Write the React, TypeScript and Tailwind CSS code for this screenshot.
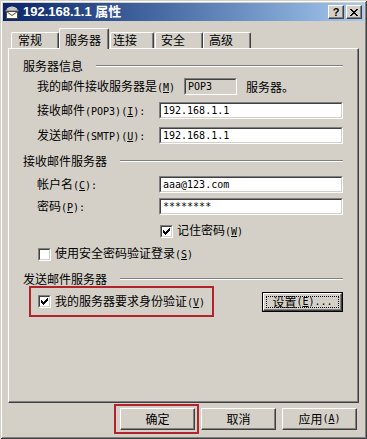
import React from "react";

function A({ children }: { children: React.ReactNode }) {
  return <span className="font-['DejaVu_Sans_Mono',monospace] text-[10px]">{children}</span>;
}

function Field({ value, w, gray }: { value: string; w: string; gray?: boolean }) {
  return (
    <div className={`h-[17px] ${w} shrink-0 border border-t-[#808080] border-l-[#808080] border-r-white border-b-white`}>
      <div
        className={`h-full border border-t-[#404040] border-l-[#404040] border-r-[#d4d0c8] border-b-[#d4d0c8] ${
          gray ? "bg-[#d4d0c8]" : "bg-white"
        } pl-[2px] flex items-center font-['DejaVu_Sans_Mono',monospace] text-[10px] leading-[13px] text-black`}
      >
        {value}
      </div>
    </div>
  );
}

function Check({ checked }: { checked?: boolean }) {
  return (
    <div className="w-[13px] h-[13px] shrink-0 border border-t-[#808080] border-l-[#808080] border-r-white border-b-white">
      <div className="w-full h-full border border-t-[#404040] border-l-[#404040] border-r-[#d4d0c8] border-b-[#d4d0c8] bg-white flex items-center justify-center">
        {checked && (
          <svg width="7" height="7" viewBox="0 0 7 7" shapeRendering="crispEdges">
            <path d="M6 0h1v3h-1zM5 1h1v3h-1zM4 2h1v3h-1zM3 3h1v3h-1zM2 4h1v3h-1zM1 3h1v3h-1zM0 2h1v3h-1z" fill="#000" />
          </svg>
        )}
      </div>
    </div>
  );
}

function Group({ title }: { title: string }) {
  return (
    <div className="flex items-center h-[14px] leading-[14px]">
      <span className="whitespace-nowrap">{title}</span>
      <div className="flex-1 ml-[13px] h-[2px] border-t border-t-[#808080] border-b border-b-white" />
    </div>
  );
}

function Btn({ children, w }: { children: React.ReactNode; w: string }) {
  return (
    <div
      className={`${w} h-[22px] shrink-0 border border-t-white border-l-white border-r-[#404040] border-b-[#404040] shadow-[inset_-1px_-1px_0_#808080] flex items-center justify-center leading-[14px]`}
    >
      {children}
    </div>
  );
}

function Tab({ label, w, selected, pl }: { label: string; w: string; selected?: boolean; pl: string }) {
  if (selected) {
    return (
      <div
        className={`${w} h-[21px] -mb-[1px] relative z-10 bg-[#d4d0c8] border-t border-l border-t-white border-l-white border-r border-r-[#404040] shadow-[inset_-1px_0_0_#808080] rounded-t-[2px] ${pl} pt-[4px] leading-[14px] shrink-0`}
      >
        {label}
      </div>
    );
  }
  return (
    <div
      className={`${w} h-[16px] bg-[#d4d0c8] border-t border-l border-t-white border-l-white border-r border-r-[#404040] shadow-[inset_-1px_0_0_#808080] rounded-t-[2px] ${pl} leading-[14px] shrink-0`}
    >
      {label}
    </div>
  );
}

function TitleIcon() {
  return (
    <svg width="16" height="16" viewBox="0 0 16 16" className="shrink-0">
      <path d="M1 7 Q8 -1 15 7 Z" fill="#c8c8c8" stroke="#5a5a5a" strokeWidth="0.8" />
      <path d="M3 5 Q8 1 13 5" fill="none" stroke="#ffffff" strokeWidth="0.8" />
      <rect x="2.5" y="7.5" width="11" height="7" fill="#fffbe6" stroke="#4a4a4a" strokeWidth="1" />
      <path d="M2.5 7.5 L8 11.5 L13.5 7.5" fill="none" stroke="#4a4a4a" strokeWidth="1" />
    </svg>
  );
}

export default function App() {
  return (
    <div className="w-[367px] h-[439px] overflow-hidden bg-[#d4d0c8] text-black font-['Noto_Sans_CJK_SC',sans-serif] text-[12px] p-[3px] shadow-[inset_1px_1px_0_#d4d0c8,inset_-1px_-1px_0_#404040,inset_2px_2px_0_#ffffff,inset_-2px_-2px_0_#808080] flex flex-col">
      {/* Title bar */}
      <div className="h-[18px] shrink-0 bg-linear-to-r from-[#0a246a] to-[#a6caf0] flex items-center pl-[1px] pr-[2px]">
        <TitleIcon />
        <span className="ml-[3px] text-white font-bold text-[13px] leading-[16px] font-['Liberation_Sans','Noto_Sans_CJK_SC',sans-serif] whitespace-nowrap">
          192.168.1.1 属性
        </span>
        <div className="flex-1" />
        <div className="w-[16px] h-[14px] border border-t-white border-l-white border-r-[#404040] border-b-[#404040] shadow-[inset_-1px_-1px_0_#808080] bg-[#d4d0c8] flex items-center justify-center font-['Liberation_Sans',sans-serif] font-bold text-[11px] leading-[11px]">
          ?
        </div>
        <div className="ml-[2px] w-[16px] h-[14px] border border-t-white border-l-white border-r-[#404040] border-b-[#404040] shadow-[inset_-1px_-1px_0_#808080] bg-[#d4d0c8] flex items-center justify-center">
          <svg width="8" height="7" viewBox="0 0 8 7" shapeRendering="crispEdges">
            <path d="M0 0h2v1h-2zM6 0h2v1h-2zM1 1h2v1h-2zM5 1h2v1h-2zM2 2h4v1h-4zM3 3h2v1h-2zM2 4h4v1h-4zM1 5h2v1h-2zM5 5h2v1h-2zM0 6h2v1h-2zM6 6h2v1h-2z" fill="#000" />
          </svg>
        </div>
      </div>

      {/* Tabs */}
      <div className="h-[27px] shrink-0 flex items-end pl-[8px]">
        <Tab label="常规" w="w-[48px]" pl="pl-[6px]" />
        <Tab label="服务器" w="w-[50px]" pl="pl-[5px]" selected />
        <div className="w-[1px] shrink-0" />
        <Tab label="连接" w="w-[44px]" pl="pl-[2px]" />
        <div className="w-[1px] shrink-0" />
        <Tab label="安全" w="w-[48px]" pl="pl-[5px]" />
        <Tab label="高级" w="w-[48px]" pl="pl-[5px]" />
      </div>

      {/* Panel */}
      <div className="ml-[5px] w-[351px] h-[355px] shrink-0 border-t border-l border-t-white border-l-white border-r border-b border-r-[#404040] border-b-[#404040] shadow-[inset_-1px_-1px_0_#808080] flex flex-col pl-[14px] pr-[15px]">
        <div className="mt-[10px]">
          <Group title="服务器信息" />
        </div>

        <div className="mt-[5px] h-[17px] flex items-center pl-[14px] leading-[14px]">
          <span className="w-[147px] shrink-0 whitespace-nowrap">
            我的邮件接收服务器是<A>(<u>M</u>)</A>
          </span>
          <Field value="POP3" w="w-[53px]" gray />
          <span className="ml-[9px] whitespace-nowrap">服务器。</span>
        </div>

        <div className="mt-[7px] h-[17px] flex items-center pl-[14px] leading-[14px]">
          <span className="w-[122px] shrink-0 whitespace-nowrap">
            接收邮件<A>(POP3)(<u>I</u>):</A>
          </span>
          <Field value="192.168.1.1" w="w-[184px]" />
        </div>

        <div className="mt-[8px] h-[17px] flex items-center pl-[14px] leading-[14px]">
          <span className="w-[122px] shrink-0 whitespace-nowrap">
            发送邮件<A>(SMTP)(<u>U</u>):</A>
          </span>
          <Field value="192.168.1.1" w="w-[184px]" />
        </div>

        <div className="mt-[10px]">
          <Group title="接收邮件服务器" />
        </div>

        <div className="mt-[8px] h-[17px] flex items-center pl-[14px] leading-[14px]">
          <span className="w-[122px] shrink-0 whitespace-nowrap">
            帐户名<A>(<u>C</u>):</A>
          </span>
          <Field value="aaa@123.com" w="w-[184px]" />
        </div>

        <div className="mt-[5px] h-[17px] flex items-center pl-[14px] leading-[14px]">
          <span className="w-[122px] shrink-0 whitespace-nowrap">
            密码<A>(<u>P</u>):</A>
          </span>
          <Field value="********" w="w-[184px]" />
        </div>

        <div className="mt-[8px] h-[16px] flex items-center pl-[137px] leading-[14px]">
          <Check checked />
          <span className="ml-[4px] whitespace-nowrap">
            记住密码<A>(<u>W</u>)</A>
          </span>
        </div>

        <div className="mt-[7px] h-[16px] flex items-center pl-[15px] leading-[14px]">
          <Check />
          <span className="ml-[4px] whitespace-nowrap">
            使用安全密码验证登录<A>(<u>S</u>)</A>
          </span>
        </div>

        <div className="mt-[10px]">
          <Group title="发送邮件服务器" />
        </div>

        <div className="h-[31px] flex items-center justify-between leading-[14px]">
          <div className="ml-[6px] w-[185px] h-full border-2 border-[#b3242a] flex items-center pl-[7px]">
            <Check checked />
            <span className="ml-[4px] whitespace-nowrap">
              我的服务器要求身份验证<A>(<u>V</u>)</A>
            </span>
          </div>
          <div className="w-[81px] h-[20px] border border-black">
            <div className="w-full h-full border border-t-white border-l-white border-r-[#404040] border-b-[#404040] shadow-[inset_-1px_-1px_0_#808080] p-[2px]">
              <div className="w-full h-full border border-dotted border-black flex items-center justify-center whitespace-nowrap">
                设置<A>(<u>E</u>)...</A>
              </div>
            </div>
          </div>
        </div>
      </div>

      {/* Bottom buttons */}
      <div className="mt-[5px] h-[22px] shrink-0 flex justify-end gap-[6px] pr-[7px]">
        <div className="relative">
          <Btn w="w-[75px]">确定</Btn>
          <div className="absolute -left-[6px] -top-[4px] -right-[4px] -bottom-[4px] border-2 border-[#b3242a] pointer-events-none" />
        </div>
        <Btn w="w-[75px]">取消</Btn>
        <Btn w="w-[75px]">
          应用<A>(<u>A</u>)</A>
        </Btn>
      </div>
    </div>
  );
}
